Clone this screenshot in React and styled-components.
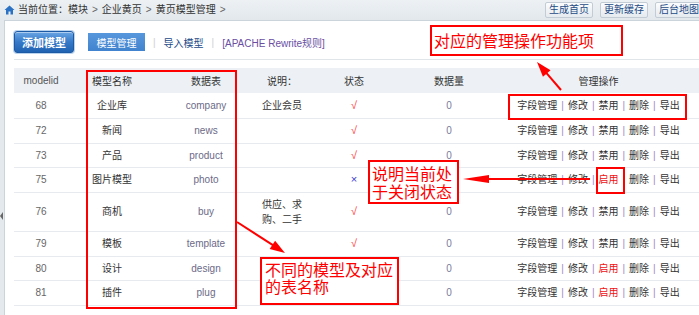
import React from "react";
import styled, { createGlobalStyle } from "styled-components";

const GlobalStyle = createGlobalStyle`
  html, body { margin: 0; padding: 0; background: #fff; overflow: hidden; }
  body {
    font-family: "Liberation Sans", "Noto Sans CJK SC", sans-serif;
    font-size: 10px;
    color: #333;
  }
`;

const Page = styled.div`
  position: relative;
  width: 706px;
  height: 315px;
  overflow: hidden;
  background: #e4e9ee;
`;

const TopBar = styled.div`
  display: flex;
  align-items: center;
  height: 20px;
  padding-left: 4px;
  background: linear-gradient(#edf1f4, #e3e8ed);
`;

const Crumb = styled.div`
  display: flex;
  align-items: center;
  color: #333;
  line-height: 20px;
  svg { margin-right: 3px; }
`;

const CrumbSep = styled.span`
  margin: 0 4px;
  color: #666;
  font-family: "Liberation Sans", sans-serif;
`;

const TopButtons = styled.div`
  margin-left: auto;
  display: flex;
  gap: 7px;
  padding-right: 3px;
`;

const TopButton = styled.button`
  width: 48px;
  height: 16px;
  padding: 0;
  border: 1px solid #c3ccd5;
  border-radius: 2px;
  background: linear-gradient(#fbfcfd, #e6ebf0);
  color: #1e4b85;
  font: inherit;
  line-height: 14px;
`;

const Body = styled.div`
  display: flex;
  height: 295px;
`;

const SideStrip = styled.div`
  width: 4px;
  border-right: 1px solid #cbd3db;
  padding-top: 192px;
  box-sizing: content-box;
`;

const Toggle = styled.div`
  width: 0;
  height: 0;
  border-top: 4px solid transparent;
  border-bottom: 4px solid transparent;
  border-right: 3px solid #666;
`;

const Main = styled.div`
  flex: 1;
  background: #fff;
  border-top: 1px solid #cbd3db;
  padding-left: 9px;
`;

const Toolbar = styled.div`
  display: flex;
  align-items: center;
  height: 34px;
  padding-top: 4px;
  border-bottom: 1px solid #e0e5ea;
`;

const AddButton = styled.button`
  width: 60px;
  height: 22px;
  padding: 0;
  border: 1px solid #1d5aa6;
  border-radius: 3px;
  background: linear-gradient(#6aa6e4, #3579c8 50%, #2163b3);
  box-shadow: inset 0 1px 0 rgba(255, 255, 255, 0.45), 0 0 0 1px #b9d2ee;
  color: #fff;
  font: inherit;
  font-size: 11px;
  font-weight: bold;
  margin-right: 14px;
`;

const TabButton = styled.button`
  width: 57px;
  height: 18px;
  padding: 0;
  border: none;
  background: linear-gradient(#5697dc, #4283cf);
  color: #fff;
  font: inherit;
`;

const LinkSep = styled.span`
  margin: 0 8px;
  color: #cfcfcf;
`;

const NavLink = styled.a`
  color: ${(p) => (p.$purple ? "#6a4ea2" : "#1b4a89")};
  text-decoration: none;
`;

const Table = styled.table`
  margin-top: 8px;
  width: 685px;
  table-layout: fixed;
  border-collapse: collapse;
`;

const HeadCell = styled.th`
  height: 25px;
  padding: 0;
  background: #edf1f6;
  font-weight: normal;
  color: ${(p) => (p.$latin ? "#555" : "#333")};
  text-align: center;
`;

const Row = styled.tr`
  height: ${(p) => p.$h}px;
`;

const Cell = styled.td`
  padding: 0 ${(p) => (p.$pad ? 4 : 0)}px;
  border-bottom: 1px solid #e7ebef;
  text-align: center;
  vertical-align: middle;
  line-height: 15px;
  color: ${(p) => p.$color || "#333"};
`;

const Mark = styled.span`
  font-size: 11px;
  color: ${(p) => (p.$on ? "#ff3333" : "#3a3ad4")};
`;

const ActSep = styled.span`
  margin: 0 4px;
  color: #9f88c8;
`;

const Act = styled.span`
  color: ${(p) => (p.$red ? "#ee1111" : "#333")};
`;

const Note = styled.div`
  position: absolute;
  box-sizing: border-box;
  border: 2px solid #f00;
  background: #fff;
  color: #f00;
  font-family: "Noto Sans CJK SC", sans-serif;
  font-size: 16px;
  padding: ${(p) => p.$pad || "0 0 0 2px"};
  line-height: ${(p) => p.$lh}px;
  white-space: nowrap;
`;

const Outline = styled.div`
  position: absolute;
  box-sizing: border-box;
  border: 2px solid #f00;
  pointer-events: none;
`;

const Arrows = styled.svg`
  position: absolute;
  left: 0;
  top: 0;
  pointer-events: none;
`;

const rows = [
  { id: 68, name: "企业库", table: "company", desc: "企业会员", on: true, h: 25 },
  { id: 72, name: "新闻", table: "news", on: true, h: 25 },
  { id: 73, name: "产品", table: "product", on: true, h: 24 },
  { id: 75, name: "图片模型", table: "photo", on: false, h: 25 },
  { id: 76, name: "商机", table: "buy", desc: "供应、求购、二手", on: true, h: 39 },
  { id: 79, name: "模板", table: "template", on: true, h: 25 },
  { id: 80, name: "设计", table: "design", on: false, h: 24 },
  { id: 81, name: "插件", table: "plug", on: false, h: 25 },
];

const cols = [54, 88, 100, 52, 92, 98, 201];

function HomeIcon() {
  return (
    <svg width="11" height="10" viewBox="0 0 11 10">
      <path d="M5.5 0.5 L0.5 5 L2 5 L2 9.5 L4.5 9.5 L4.5 6.5 L6.5 6.5 L6.5 9.5 L9 9.5 L9 5 L10.5 5 Z" fill="#2b72c4" />
    </svg>
  );
}

function Arrow({ x1, y1, x2, y2, len = 14, half = 5 }) {
  const dx = x2 - x1;
  const dy = y2 - y1;
  const d = Math.hypot(dx, dy);
  const ux = dx / d;
  const uy = dy / d;
  const bx = x2 - ux * len;
  const by = y2 - uy * len;
  const px = -uy * half;
  const py = ux * half;
  return (
    <g>
      <line x1={x1} y1={y1} x2={bx + ux * 2} y2={by + uy * 2} stroke="#f00" strokeWidth="2" />
      <polygon points={`${x2},${y2} ${bx + px},${by + py} ${bx - px},${by - py}`} fill="#f00" />
    </g>
  );
}

export default function App() {
  return (
    <>
      <GlobalStyle />
      <Page>
        <TopBar>
          <Crumb>
            <HomeIcon />
            当前位置：模块<CrumbSep>&gt;</CrumbSep>企业黄页<CrumbSep>&gt;</CrumbSep>黄页模型管理<CrumbSep>&gt;</CrumbSep>
          </Crumb>
          <TopButtons>
            <TopButton>生成首页</TopButton>
            <TopButton>更新缓存</TopButton>
            <TopButton>后台地图</TopButton>
          </TopButtons>
        </TopBar>
        <Body>
          <SideStrip>
            <Toggle />
          </SideStrip>
          <Main>
            <Toolbar>
              <AddButton>添加模型</AddButton>
              <TabButton>模型管理</TabButton>
              <LinkSep>|</LinkSep>
              <NavLink href="#">导入模型</NavLink>
              <LinkSep>|</LinkSep>
              <NavLink href="#" $purple>[APACHE Rewrite规则]</NavLink>
            </Toolbar>
            <Table>
              <colgroup>
                {cols.map((w, i) => (
                  <col key={i} style={{ width: w }} />
                ))}
              </colgroup>
              <thead>
                <tr>
                  <HeadCell $latin>modelid</HeadCell>
                  <HeadCell>模型名称</HeadCell>
                  <HeadCell>数据表</HeadCell>
                  <HeadCell>说明：</HeadCell>
                  <HeadCell>状态</HeadCell>
                  <HeadCell>数据量</HeadCell>
                  <HeadCell>管理操作</HeadCell>
                </tr>
              </thead>
              <tbody>
                {rows.map((r) => (
                  <Row key={r.id} $h={r.h}>
                    <Cell $color="#666">{r.id}</Cell>
                    <Cell>{r.name}</Cell>
                    <Cell $color="#6c6a88">{r.table}</Cell>
                    <Cell $pad>{r.desc || ""}</Cell>
                    <Cell>
                      <Mark $on={r.on}>{r.on ? "√" : "×"}</Mark>
                    </Cell>
                    <Cell $color="#7a7a9c">0</Cell>
                    <Cell>
                      <Act>字段管理</Act>
                      <ActSep>|</ActSep>
                      <Act>修改</Act>
                      <ActSep>|</ActSep>
                      <Act $red={!r.on}>{r.on ? "禁用" : "启用"}</Act>
                      <ActSep>|</ActSep>
                      <Act>删除</Act>
                      <ActSep>|</ActSep>
                      <Act>导出</Act>
                    </Cell>
                  </Row>
                ))}
              </tbody>
            </Table>
          </Main>
        </Body>

        <Outline style={{ left: 86, top: 70, width: 151, height: 239 }} />
        <Outline style={{ left: 508, top: 94, width: 179, height: 26 }} />
        <Outline style={{ left: 596, top: 167, width: 29, height: 27 }} />

        <Note $lh={27} style={{ left: 430, top: 25, width: 193, height: 31 }}>
          对应的管理操作功能项
        </Note>
        <Note $lh={18} $pad="2px 0 0 2px" style={{ left: 368, top: 160, width: 91, height: 44 }}>
          说明当前处
          <br />
          于关闭状态
        </Note>
        <Note $lh={17} $pad="2px 0 0 3px" style={{ left: 260, top: 257, width: 139, height: 48 }}>
          不同的模型及对应
          <br />
          的表名称
        </Note>

        <Arrows width="706" height="315" viewBox="0 0 706 315">
          <Arrow x1={561} y1={90} x2={537} y2={62} len={15} half={5} />
          <Arrow x1={590} y1={179} x2={463} y2={179} len={26} half={4} />
          <Arrow x1={237} y1={222} x2={285} y2={253} len={15} half={5} />
        </Arrows>
      </Page>
    </>
  );
}
